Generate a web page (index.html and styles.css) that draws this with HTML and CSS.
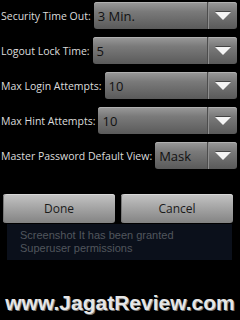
FILE: index.html
```html
<!DOCTYPE html>
<html>
<head>
<meta charset="utf-8">
<link rel="stylesheet" href="styles.css">
</head>
<body>
<div class="screen">
  <div class="form">
    <div class="row">
      <span class="label">Security Time Out:</span>
      <div class="spinner"><span class="value">3 Min.</span><span class="arrow-box"><span class="arrow"></span></span></div>
    </div>
    <div class="row">
      <span class="label">Logout Lock Time:</span>
      <div class="spinner"><span class="value">5</span><span class="arrow-box"><span class="arrow"></span></span></div>
    </div>
    <div class="row">
      <span class="label">Max Login Attempts:</span>
      <div class="spinner"><span class="value">10</span><span class="arrow-box"><span class="arrow"></span></span></div>
    </div>
    <div class="row">
      <span class="label">Max Hint Attempts:</span>
      <div class="spinner"><span class="value">10</span><span class="arrow-box"><span class="arrow"></span></span></div>
    </div>
    <div class="row">
      <span class="label">Master Password Default View:</span>
      <div class="spinner"><span class="value">Mask</span><span class="arrow-box"><span class="arrow"></span></span></div>
    </div>
  </div>
  <div class="buttons">
    <div class="btn">Done</div>
    <div class="btn">Cancel</div>
  </div>
  <div class="toast"><div class="line">Screenshot It has been granted</div><div class="line">Superuser permissions</div></div>
  <div class="watermark">www.JagatReview.com</div>
</div>
</body>
</html>
```
FILE: styles.css
```css
html, body {
  margin: 0;
  padding: 0;
  background: #000;
}
.screen {
  width: 240px;
  height: 320px;
  overflow: hidden;
  font-family: "Open Sans", "DejaVu Sans", sans-serif;
  display: flex;
  flex-direction: column;
}
.form {
  display: flex;
  flex-direction: column;
  gap: 8px;
  padding: 2px 3px 0 1px;
}
.row {
  display: flex;
  align-items: center;
  gap: 3px;
  height: 27px;
}
.label {
  color: #dcdcdc;
  font-size: 10.5px;
  white-space: nowrap;
}
.spinner {
  flex: 1;
  height: 27px;
  border-radius: 3px;
  background: linear-gradient(#9a9a9a 0%, #7a7a7a 35%, #5a5a5a 100%);
  box-shadow: inset 0 1px 0 #b0b0b0;
  display: flex;
  align-items: stretch;
}
.value {
  flex: 1;
  display: flex;
  align-items: center;
  padding-left: 4px;
  color: #111;
  font-size: 13px;
}
.arrow-box {
  width: 29px;
  border-left: 1px solid #4c4c4c;
  box-shadow: inset 1px 0 0 #8e8e8e;
  display: flex;
  align-items: center;
  justify-content: center;
}
.arrow {
  width: 0;
  height: 0;
  border-left: 8px solid transparent;
  border-right: 8px solid transparent;
  border-top: 8px solid #f4f4f4;
  filter: drop-shadow(0 -1px 0 #444);
}
.buttons {
  display: flex;
  gap: 6px;
  padding: 0 7px 0 3px;
  margin-top: 25px;
}
.btn {
  flex: 1;
  height: 29px;
  border-radius: 3px;
  background: linear-gradient(#c4c4c4 0%, #a6a6a6 45%, #838383 100%);
  box-shadow: inset 1px 0 0 #777, inset 0 1px 0 #d8d8d8;
  display: flex;
  align-items: center;
  justify-content: center;
  color: #1a1a1a;
  font-size: 12px;
}
.toast {
  margin: 1px 8px 0 7px;
  height: 36px;
  background: #0b101b;
  color: #51565d;
  font-family: "Liberation Sans", Arial, sans-serif;
  font-size: 11px;
  padding: 5px 0 0 13px;
  box-sizing: border-box;
}
.line {
  height: 13px;
  line-height: 13px;
}
.watermark {
  margin-top: 33px;
  text-align: center;
  font-family: "Liberation Sans", Arial, sans-serif;
  font-weight: bold;
  font-size: 21px;
  line-height: 20px;
  color: #e6e6e6;
  text-shadow: 1px 1px 0 #777;
}
```
